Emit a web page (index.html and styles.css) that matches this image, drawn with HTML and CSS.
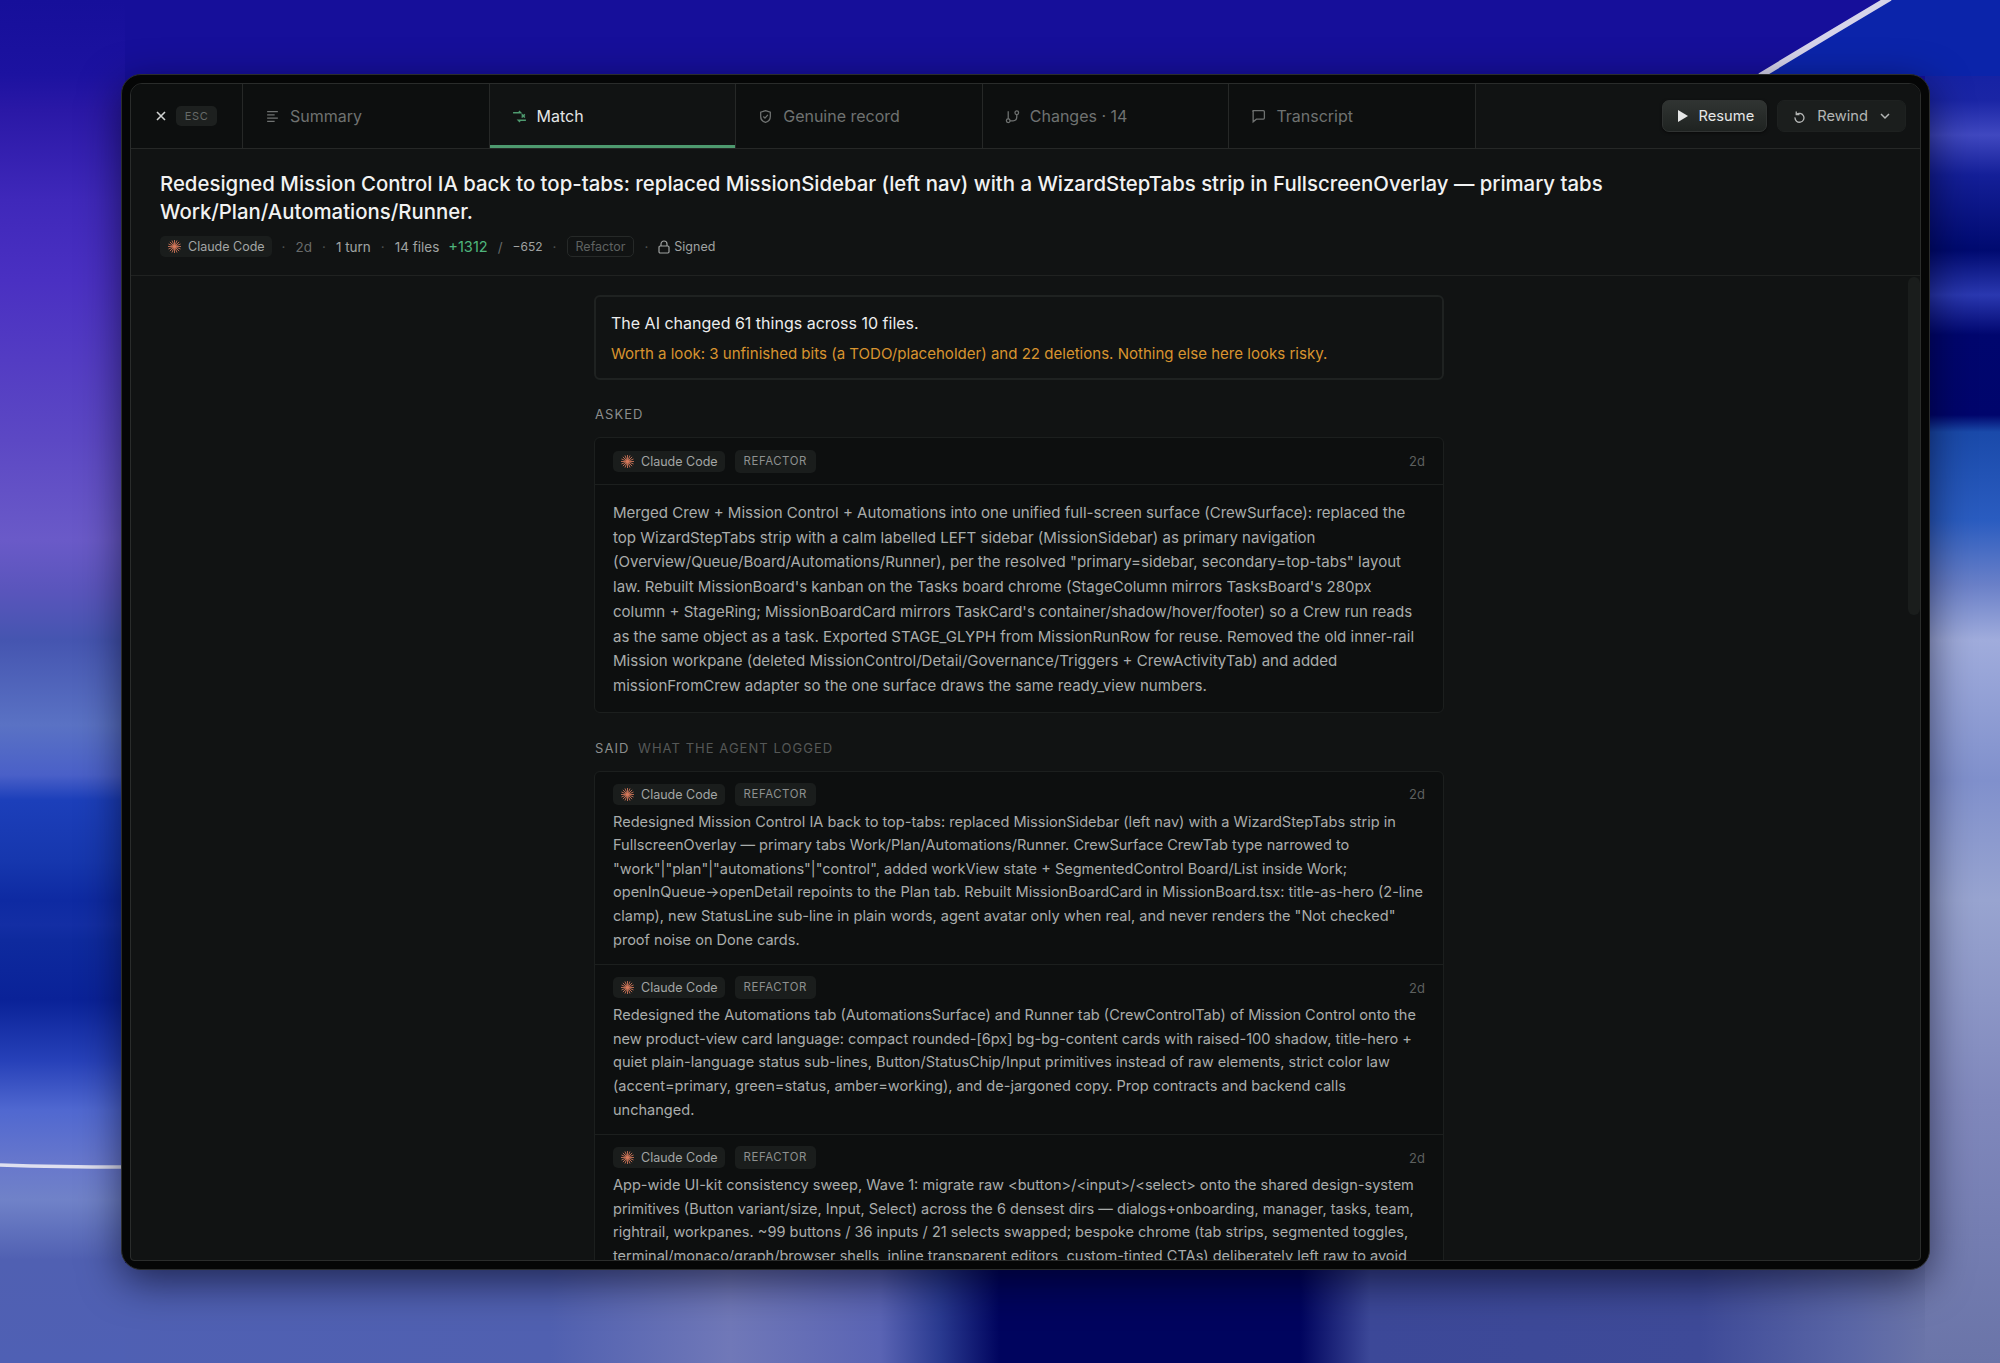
FILE: index.html
```html
<!DOCTYPE html>
<html lang="en">
<head>
  <meta charset="UTF-8" />
  <title>Match</title>
  <link rel="stylesheet" href="styles.css">
</head>
<body>
  <!-- Wallpaper streaks -->
  <svg class="streaks" viewBox="0 0 2000 1363" width="2000" height="1363">
    <path class="sky-right" d="M1760 76 L1892 0 L2000 0 L2000 76 Z" />
    <path class="streak" d="M1760 76 Q1826 36 1890 -2" />
    <path class="streak-left" d="M0 1165 Q60 1167 124 1167" />
  </svg>

  <div class="frame">
    <div class="window">

      <div class="tabbar">
        <div class="close-cell">
          <svg class="icon-x" viewBox="0 0 12 12"><path d="M2 2l8 8M10 2l-8 8" /></svg>
          <span class="esc">ESC</span>
        </div>
        <div class="tab">
          <svg class="tab-icon" viewBox="0 0 14 14"><path d="M2 2.500h10M2 5.500h7M2 8.500h10M2 11.500h7" /></svg>
          Summary
        </div>
        <div class="tab active">
          <svg class="tab-icon" viewBox="0 0 14 14"><path d="M1 3.500h7L6.500 2M13 10.500H6L7.500 12M9 5l3 3M12 5L9 8" /></svg>
          Match
        </div>
        <div class="tab">
          <svg class="tab-icon" viewBox="0 0 14 14"><path d="M7 1.500l4.500 1.500v4c0 3-2 4.800-4.500 5.500-2.500-.7-4.500-2.500-4.500-5.500V3zM5 7l1.500 1.500L9.200 5.500" /></svg>
          Genuine record
        </div>
        <div class="tab">
          <svg class="tab-icon" viewBox="0 0 14 14"><circle cx="3" cy="11" r="1.700" /><circle cx="11" cy="3.500" r="1.700" /><path d="M3 2v7.300M4.700 11h2.800c2 0 3.500-1.500 3.500-3.500V5.200" /></svg>
          Changes · 14
        </div>
        <div class="tab">
          <svg class="tab-icon" viewBox="0 0 14 14"><path d="M2.500 1.500h9a1 1 0 0 1 1 1v6a1 1 0 0 1-1 1H5L2 12V2.500a.5.5 0 0 1 .5-1z" /></svg>
          Transcript
        </div>
        <div class="tab-actions">
          <button class="btn btn-primary">
            <svg class="icon-play" viewBox="0 0 10 12"><path d="M0 0l10 6-10 6z" /></svg>
            Resume
          </button>
          <button class="btn btn-rewind">
            <svg class="icon-btn" viewBox="0 0 14 14"><path d="M3.500 1.500v3.500H7M3.600 5A4.800 4.800 0 1 1 2.200 8" /></svg>
            Rewind
            <svg class="icon-chev" viewBox="0 0 12 12"><path d="M2 4l4 4 4-4" /></svg>
          </button>
        </div>
      </div>

      <div class="head">
        <h1>Redesigned Mission Control IA back to top-tabs: replaced MissionSidebar (left nav) with a WizardStepTabs strip in FullscreenOverlay — primary tabs Work/Plan/Automations/Runner.</h1>
        <div class="meta">
          <span class="chip">
            <svg class="burst" viewBox="0 0 14 14"><path d="M7 0v14M0 7h14M2 2l10 10M12 2L2 12M4.300 .5l5.400 13M9.700 .5l-5.400 13M.5 4.300l13 5.400M.5 9.700l13-5.400" /><circle cx="7" cy="7" r="1" /></svg>
            Claude Code
          </span>
          <span class="dot">·</span>
          <span class="dim">2d</span>
          <span class="dot">·</span>
          <span>1 turn</span>
          <span class="dot">·</span>
          <span>14 files</span>
          <span class="plus">+1312</span>
          <span class="dim">/</span>
          <span class="minus">−652</span>
          <span class="dot">·</span>
          <span class="outline">Refactor</span>
          <span class="dot">·</span>
          <span class="signed">
            <svg class="icon-lock" viewBox="0 0 12 14"><rect x="1" y="6" width="10" height="7" rx="1.200" /><path d="M3 6V4a3 3 0 0 1 6 0v2" /></svg>
            Signed
          </span>
        </div>
      </div>

      <div class="scroll">
        <div class="scrollbar"></div>
        <div class="column">

          <div class="notice">
            <p class="notice-main">The AI changed 61 things across 10 files.</p>
            <p class="notice-warn">Worth a look: 3 unfinished bits (a TODO/placeholder) and 22 deletions. Nothing else here looks risky.</p>
          </div>

          <div class="section-label">ASKED</div>
          <div class="card">
            <div class="card-top">
              <span class="chip">
                <svg class="burst" viewBox="0 0 14 14"><path d="M7 0v14M0 7h14M2 2l10 10M12 2L2 12M4.300 .5l5.400 13M9.700 .5l-5.400 13M.5 4.300l13 5.400M.5 9.700l13-5.400" /><circle cx="7" cy="7" r="1" /></svg>
                Claude Code
              </span>
              <span class="tag">REFACTOR</span>
              <span class="when">2d</span>
            </div>
            <p class="asked-text">Merged Crew + Mission Control + Automations into one unified full-screen surface (CrewSurface): replaced the top WizardStepTabs strip with a calm labelled LEFT sidebar (MissionSidebar) as primary navigation (Overview/Queue/Board/Automations/Runner), per the resolved "primary=sidebar, secondary=top-tabs" layout law. Rebuilt MissionBoard's kanban on the Tasks board chrome (StageColumn mirrors TasksBoard's 280px column + StageRing; MissionBoardCard mirrors TaskCard's container/shadow/hover/footer) so a Crew run reads as the same object as a task. Exported STAGE_GLYPH from MissionRunRow for reuse. Removed the old inner-rail Mission workpane (deleted MissionControl/Detail/Governance/Triggers + CrewActivityTab) and added missionFromCrew adapter so the one surface draws the same ready_view numbers.</p>
          </div>

          <div class="section-label said"><span>SAID</span> <span class="label-dim">WHAT THE AGENT LOGGED</span></div>
          <div class="card">
            <div class="item">
              <div class="item-top">
                <span class="chip">
                  <svg class="burst" viewBox="0 0 14 14"><path d="M7 0v14M0 7h14M2 2l10 10M12 2L2 12M4.300 .5l5.400 13M9.700 .5l-5.400 13M.5 4.300l13 5.400M.5 9.700l13-5.400" /><circle cx="7" cy="7" r="1" /></svg>
                  Claude Code
                </span>
                <span class="tag">REFACTOR</span>
                <span class="when">2d</span>
              </div>
              <p>Redesigned Mission Control IA back to top-tabs: replaced MissionSidebar (left nav) with a WizardStepTabs strip in FullscreenOverlay — primary tabs Work/Plan/Automations/Runner. CrewSurface CrewTab type narrowed to "work"|"plan"|"automations"|"control", added workView state + SegmentedControl Board/List inside Work; openInQueue→openDetail repoints to the Plan tab. Rebuilt MissionBoardCard in MissionBoard.tsx: title-as-hero (2-line clamp), new StatusLine sub-line in plain words, agent avatar only when real, and never renders the "Not checked" proof noise on Done cards.</p>
            </div>
            <div class="item">
              <div class="item-top">
                <span class="chip">
                  <svg class="burst" viewBox="0 0 14 14"><path d="M7 0v14M0 7h14M2 2l10 10M12 2L2 12M4.300 .5l5.400 13M9.700 .5l-5.400 13M.5 4.300l13 5.400M.5 9.700l13-5.400" /><circle cx="7" cy="7" r="1" /></svg>
                  Claude Code
                </span>
                <span class="tag">REFACTOR</span>
                <span class="when">2d</span>
              </div>
              <p>Redesigned the Automations tab (AutomationsSurface) and Runner tab (CrewControlTab) of Mission Control onto the new product-view card language: compact rounded-[6px] bg-bg-content cards with raised-100 shadow, title-hero + quiet plain-language status sub-lines, Button/StatusChip/Input primitives instead of raw elements, strict color law (accent=primary, green=status, amber=working), and de-jargoned copy. Prop contracts and backend calls unchanged.</p>
            </div>
            <div class="item">
              <div class="item-top">
                <span class="chip">
                  <svg class="burst" viewBox="0 0 14 14"><path d="M7 0v14M0 7h14M2 2l10 10M12 2L2 12M4.300 .5l5.400 13M9.700 .5l-5.400 13M.5 4.300l13 5.400M.5 9.700l13-5.400" /><circle cx="7" cy="7" r="1" /></svg>
                  Claude Code
                </span>
                <span class="tag">REFACTOR</span>
                <span class="when">2d</span>
              </div>
              <p>App-wide UI-kit consistency sweep, Wave 1: migrate raw &lt;button&gt;/&lt;input&gt;/&lt;select&gt; onto the shared design-system primitives (Button variant/size, Input, Select) across the 6 densest dirs — dialogs+onboarding, manager, tasks, team, rightrail, workpanes. ~99 buttons / 36 inputs / 21 selects swapped; bespoke chrome (tab strips, segmented toggles, terminal/monaco/graph/browser shells, inline transparent editors, custom-tinted CTAs) deliberately left raw to avoid churn.</p>
            </div>
          </div>

        </div>
      </div>

    </div>
  </div>
</body>
</html>
```

FILE: styles.css
```css
* {
  box-sizing: border-box;
  margin: 0;
  padding: 0;
}

html, body {
  height: 100%;
  overflow: hidden;
}

/* Wallpaper: only the strips round the window are ever seen */
body {
  position: relative;
  font-family: 'Inter', 'Liberation Sans', sans-serif;
  color: #a9acab;
  padding: 74px 70px 0 121px;
  background-color: #160f9a;
  background-repeat: no-repeat;
  background-size: 125px 100%, 75px 100%, 100% 100px;
  background-position: left top, right top, left bottom;
  background-image:
    linear-gradient(180deg, #160f9a 0, #1c12a0 74px, #2a18a6 110px, #3f28ba 200px, #4a30c2 280px, #5c48c4 440px, #6a5ac8 540px, #5a55bc 590px, #4555b0 640px, #5a72c4 725px, #4a60c8 775px, #1c3fba 800px, #1637ae 860px, #0e2aa2 900px, #132ea4 925px, #0e2a9e 940px, #0a2298 1000px, #2640b8 1060px, #5068d0 1110px, #6878cc 1165px, #7082c8 1200px, #5060b2 1260px, #4f60b4 1363px),
    linear-gradient(180deg, #0a1aa0 0, #1a25a5 100px, #4048c0 135px, #141f98 175px, #000a70 250px, #2a38b0 295px, #00066e 335px, #00056c 415px, #1a4aaa 432px, #2a5cc0 520px, #6a80c8 585px, #a0acdc 640px, #8090cc 780px, #98a4d0 900px, #8088bc 1100px, #6a74a8 1363px),
    linear-gradient(90deg, #4f60b4 0, #5060b0 550px, #7078b8 730px, #5a64b4 880px, #2a3a90 940px, #00045e 1000px, #00045e 1300px, #3c4898 1370px, #3e4a98 1700px, #5a66a6 1850px, #6a74a8 1925px);
}

.streaks {
  position: absolute;
  top: 0;
  left: 0;
}

.sky-right {
  fill: #0b24aa;
}

.streak {
  fill: none;
  stroke: #d6d4ea;
  stroke-width: 6;
}

.streak-left {
  fill: none;
  stroke: #dfe0f0;
  stroke-width: 3.5;
}

/* Window */
.frame {
  position: relative;
  width: 1809px;
  height: 1196px;
  padding: 8px;
  background-color: #050606;
  border: 1px solid #2b2d2d;
  border-radius: 20px;
  box-shadow: 0 12px 40px rgba(0, 0, 20, 0.6);
}

.window {
  display: flex;
  flex-direction: column;
  height: 100%;
  overflow: hidden;
  background-color: #111313;
  border: 1px solid #2a2c2b;
  border-radius: 12px 12px 4px 4px;
}

/* Tabs */
.tabbar {
  display: flex;
  height: 65px;
  flex-shrink: 0;
  background-color: #0d0f0f;
  border-bottom: 1px solid #262827;
}

.close-cell {
  display: flex;
  align-items: center;
  width: 112px;
  padding-left: 24px;
  gap: 9px;
  border-right: 1px solid #262827;
}

.icon-x {
  width: 12px;
  height: 12px;
  fill: none;
  stroke: #d0d2d1;
  stroke-width: 1.6;
}

.esc {
  width: 41px;
  height: 20px;
  line-height: 20px;
  text-align: center;
  font-size: 11px;
  letter-spacing: 0.06em;
  color: #666a68;
  background-color: #1d201f;
  border-radius: 5px;
}

.tab {
  display: flex;
  align-items: center;
  width: 246.6px;
  padding-left: 22px;
  gap: 10px;
  font-size: 16px;
  color: #6f7271;
  border-right: 1px solid #262827;
}

.tab-icon {
  width: 15px;
  height: 15px;
  fill: none;
  stroke: #6f7271;
  stroke-width: 1.2;
}

.tab.active {
  color: #e4e5e5;
  background-color: #111313;
  box-shadow: inset 0 -3px 0 #4e9a6f;
}

.tab.active .tab-icon {
  stroke: #4e9a6f;
  stroke-width: 1.4;
}

.tab-actions {
  display: flex;
  align-items: center;
  justify-content: flex-end;
  flex: 1;
  gap: 10px;
  padding-right: 14px;
  background-color: #111313;
}

.btn {
  display: flex;
  align-items: center;
  height: 32px;
  gap: 11px;
  font-family: inherit;
  font-size: 14.7px;
  color: #b4b6b5;
  background-color: #1b1e1d;
  border: 1px solid #1e2120;
  border-radius: 7px;
}

.btn-primary {
  padding: 0 12px 0 15px;
  color: #e6e7e7;
  background-image: linear-gradient(180deg, #303432, #1f2321);
  border-color: #303332;
  box-shadow: 0 1px 3px rgba(0, 0, 0, 0.5);
}

.btn-rewind {
  padding: 0 14px 0 15px;
}

.icon-play {
  width: 10px;
  height: 12px;
  fill: #e6e7e7;
}

.icon-btn {
  width: 13px;
  height: 13px;
  fill: none;
  stroke: #b4b6b5;
  stroke-width: 1.4;
}

.icon-chev {
  width: 12px;
  height: 12px;
  fill: none;
  stroke: #b4b6b5;
  stroke-width: 1.5;
}

/* Title block */
.head {
  flex-shrink: 0;
  height: 127px;
  padding: 21px 30px 0 29px;
  border-bottom: 1px solid #202221;
}

h1 {
  max-width: 1460px;
  font-size: 20.37px;
  font-weight: 500;
  line-height: 28px;
  color: #f1f2f2;
}

.meta {
  display: flex;
  align-items: center;
  gap: 10px;
  margin-top: 10px;
  font-size: 13.5px;
  color: #a0a3a2;
}

.chip {
  display: inline-flex;
  align-items: center;
  height: 21px;
  padding: 0 7px 0 8px;
  gap: 7px;
  font-size: 12.5px;
  color: #a3a6a5;
  background-color: #1a1d1c;
  border-radius: 5px;
}

.burst {
  width: 13px;
  height: 13px;
  fill: #d67a5c;
  stroke: #d67a5c;
  stroke-width: 0.9;
}

.dot {
  color: #4d504f;
}

.dim {
  color: #686b6a;
}

.plus {
  margin-left: -1px;
  color: #4fb57c;
  font-size: 14.6px;
}

.minus {
  font-size: 12px;
}

.outline {
  height: 21px;
  line-height: 19px;
  padding: 0 8px;
  font-size: 12.5px;
  color: #5f6261;
  border: 1px solid #262928;
  border-radius: 5px;
}

.signed {
  display: inline-flex;
  align-items: center;
  gap: 4px;
  font-size: 12.5px;
}

.icon-lock {
  width: 12px;
  height: 14px;
  fill: none;
  stroke: #a0a3a2;
  stroke-width: 1.2;
}

/* Scrolling area */
.scroll {
  position: relative;
  flex: 1;
  overflow: hidden;
}

.scrollbar {
  position: absolute;
  top: 1px;
  right: 0;
  width: 12px;
  height: 338px;
  background-color: #1a1d1c;
  border-radius: 6px;
}

.column {
  width: 850px;
  margin-left: 463px;
  padding-top: 19px;
}

.notice {
  height: 85px;
  padding: 14px 15px 0;
  background-color: #111313;
  border: 2px solid #1f2221;
  border-radius: 6px;
}

.notice-main {
  font-size: 16px;
  line-height: 24px;
  color: #eceded;
}

.notice-warn {
  margin-top: 7px;
  font-size: 15.05px;
  line-height: 24px;
  color: #d8942f;
}

.section-label {
  margin-top: 26px;
  margin-bottom: 15px;
  padding-left: 1px;
  font-size: 13px;
  line-height: 16px;
  letter-spacing: 0.08em;
  color: #8b8e8d;
}

.section-label.said {
  margin-top: 27px;
}

.label-dim {
  margin-left: 4px;
  color: #555857;
}

.card {
  background-color: #0d0f0f;
  border: 1px solid #1c1f1e;
  border-radius: 6px;
}

.card-top {
  display: flex;
  align-items: center;
  gap: 10px;
  height: 47px;
  padding: 0 18px;
  border-bottom: 1px solid #1c1f1e;
}

.tag {
  height: 23px;
  line-height: 23px;
  padding: 0 9px;
  font-size: 11.4px;
  letter-spacing: 0.05em;
  color: #8e9190;
  background-color: #1a1d1c;
  border-radius: 5px;
}

.when {
  margin-left: auto;
  font-size: 13px;
  color: #5d605f;
}

.asked-text {
  padding: 16px 18px 13px;
  font-size: 15.05px;
  line-height: 24.7px;
}

.item {
  padding: 11px 18px 12px;
  border-bottom: 1px solid #1c1f1e;
}

.item:last-child {
  border-bottom: none;
}

.item-top {
  display: flex;
  align-items: center;
  gap: 10px;
  height: 23px;
  margin-bottom: 5px;
}

.item p {
  font-size: 14.55px;
  line-height: 23.6px;
}
```
